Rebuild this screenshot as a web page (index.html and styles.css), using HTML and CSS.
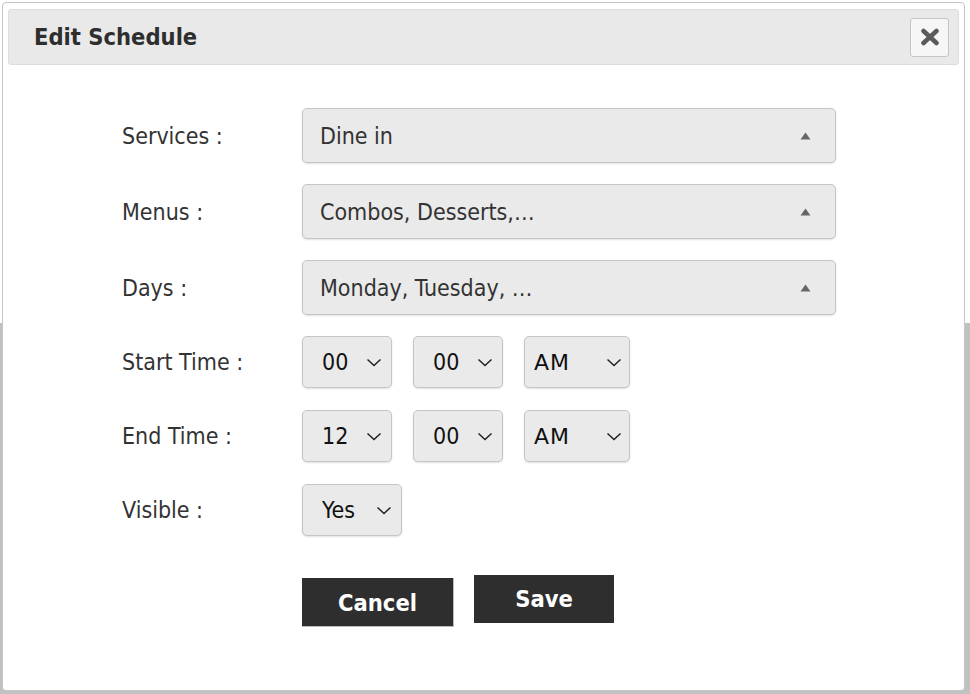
FILE: index.html
```html
<!DOCTYPE html>
<html lang="en">
<head>
    <meta charset="UTF-8">
    <meta name="viewport" content="width=device-width, initial-scale=1.0">
    <title>Edit Schedule</title>
    <link rel="stylesheet" href="styles.css">
</head>
<body>
    <div class="dialog" role="dialog" aria-labelledby="dialogTitle">
        <div class="titlebar">
            <span class="title" id="dialogTitle">Edit Schedule</span>
            <button class="close" aria-label="Close">
                <svg width="20" height="18" viewBox="0 0 20 18"><path d="M3.5 3 L16.5 15 M16.5 3 L3.5 15" stroke="#5a5a5a" stroke-width="4.5" stroke-linecap="round"/></svg>
            </button>
        </div>

        <div class="content">
            <div class="row">
                <label>Services :</label>
                <div class="multi"><span>Dine in</span><svg class="tri" width="11" height="8" viewBox="0 0 11 8"><path d="M5.5 0.5 L10.5 7.5 L0.5 7.5 Z" fill="#666"/></svg></div>
            </div>
            <div class="row">
                <label>Menus :</label>
                <div class="multi"><span>Combos, Desserts,…</span><svg class="tri" width="11" height="8" viewBox="0 0 11 8"><path d="M5.5 0.5 L10.5 7.5 L0.5 7.5 Z" fill="#666"/></svg></div>
            </div>
            <div class="row">
                <label>Days :</label>
                <div class="multi"><span>Monday, Tuesday, …</span><svg class="tri" width="11" height="8" viewBox="0 0 11 8"><path d="M5.5 0.5 L10.5 7.5 L0.5 7.5 Z" fill="#666"/></svg></div>
            </div>

            <div class="row small">
                <label>Start Time :</label>
                <div class="selects">
                    <div class="sel num"><span>00</span><svg class="chev" width="16" height="9" viewBox="0 0 16 9"><path d="M1.5 1.5 L8 7.5 L14.5 1.5" fill="none" stroke="#222" stroke-width="1.5"/></svg></div>
                    <div class="sel num"><span>00</span><svg class="chev" width="16" height="9" viewBox="0 0 16 9"><path d="M1.5 1.5 L8 7.5 L14.5 1.5" fill="none" stroke="#222" stroke-width="1.5"/></svg></div>
                    <div class="sel ampm"><span>AM</span><svg class="chev" width="16" height="9" viewBox="0 0 16 9"><path d="M1.5 1.5 L8 7.5 L14.5 1.5" fill="none" stroke="#222" stroke-width="1.5"/></svg></div>
                </div>
            </div>
            <div class="row small">
                <label>End Time :</label>
                <div class="selects">
                    <div class="sel num"><span>12</span><svg class="chev" width="16" height="9" viewBox="0 0 16 9"><path d="M1.5 1.5 L8 7.5 L14.5 1.5" fill="none" stroke="#222" stroke-width="1.5"/></svg></div>
                    <div class="sel num"><span>00</span><svg class="chev" width="16" height="9" viewBox="0 0 16 9"><path d="M1.5 1.5 L8 7.5 L14.5 1.5" fill="none" stroke="#222" stroke-width="1.5"/></svg></div>
                    <div class="sel ampm"><span>AM</span><svg class="chev" width="16" height="9" viewBox="0 0 16 9"><path d="M1.5 1.5 L8 7.5 L14.5 1.5" fill="none" stroke="#222" stroke-width="1.5"/></svg></div>
                </div>
            </div>
            <div class="row small">
                <label>Visible :</label>
                <div class="selects">
                    <div class="sel yes"><span>Yes</span><svg class="chev" width="16" height="9" viewBox="0 0 16 9"><path d="M1.5 1.5 L8 7.5 L14.5 1.5" fill="none" stroke="#222" stroke-width="1.5"/></svg></div>
                </div>
            </div>

            <div class="actions">
                <button class="btn cancel">Cancel</button>
                <button class="btn save">Save</button>
            </div>
        </div>
    </div>
</body>
</html>
```

FILE: styles.css
```css
:root {
    --ui-font: "DejaVu Sans Condensed", "DejaVu Sans", Verdana, sans-serif;
    --border: #c5c5c5;
    --field-bg: #eaeaea;
    --text: #333;
}

body {
    margin: 0;
    font-family: var(--ui-font);
    font-stretch: condensed;
    color: var(--text);
    /* page behind the dialog: white header area, grey overlay below */
    background: linear-gradient(to bottom, #fff 0, #fff 323px, #c1c1c1 323px);
    min-height: 694px;
}

.dialog {
    box-sizing: border-box;
    width: 963px;
    height: 689px;
    margin: 2px 0 0 2px;
    background: #fff;
    border: 1px solid #c5c5c5;
    border-radius: 4px;
}

.titlebar {
    box-sizing: border-box;
    height: 56px;
    margin: 6px 5px 0 5px;
    padding: 0 9px 0 25px;
    display: flex;
    align-items: center;
    justify-content: space-between;
    background: #e9e9e9;
    border: 1px solid #dddddd;
    border-radius: 3px;
}

.title {
    font-size: 23.5px;
    font-weight: bold;
    color: #2e2e2e;
}

.close {
    box-sizing: border-box;
    width: 39px;
    height: 39px;
    padding: 0;
    display: flex;
    align-items: center;
    justify-content: center;
    background: #f6f6f6;
    border: 1px solid #c5c5c5;
    border-radius: 3px;
    cursor: pointer;
}

.content {
    padding: 43px 0 0 119px;
}

.row {
    display: flex;
    align-items: center;
    height: 55px;
    margin-bottom: 21px;
}
.row.small {
    height: 52px;
    margin-bottom: 22px;
}
.row label {
    width: 180px;
    font-size: 23px;
    color: var(--text);
}

.multi {
    box-sizing: border-box;
    width: 534px;
    height: 55px;
    padding: 0 24px 0 17px;
    display: flex;
    align-items: center;
    justify-content: space-between;
    background: var(--field-bg);
    border: 1px solid var(--border);
    border-radius: 5px;
    box-shadow: 0 1px 2px rgba(0, 0, 0, 0.12);
    font-size: 23px;
    color: var(--text);
}

.selects {
    display: flex;
    gap: 21px;
}

.sel {
    box-sizing: border-box;
    height: 52px;
    padding: 0 9px 0 19px;
    display: flex;
    align-items: center;
    justify-content: space-between;
    background: var(--field-bg);
    border: 1px solid var(--border);
    border-radius: 5px;
    box-shadow: 0 1px 2px rgba(0, 0, 0, 0.12);
    font-size: 23px;
    color: #111;
}
.sel.num { width: 90px; }
.sel.ampm {
    width: 106px;
    padding-left: 9px;
    padding-right: 7px;
    font-family: "DejaVu Sans", Verdana, sans-serif;
    font-stretch: normal;
    font-size: 22px;
    letter-spacing: 1px;
}
.sel.yes { width: 100px; }

.actions {
    display: flex;
    align-items: flex-start;
    gap: 20px;
    padding: 17px 0 0 180px;
}

.btn {
    box-sizing: border-box;
    padding: 0;
    font-family: var(--ui-font);
    font-stretch: condensed;
    font-size: 23.5px;
    font-weight: bold;
    color: #fff;
    background: #2e2e2e;
    border: none;
    cursor: pointer;
}
.btn.cancel {
    width: 152px;
    height: 49px;
    margin-top: 3px;
    padding-top: 2px;
    border-right: 1px solid #bbb;
    border-bottom: 1px solid #bbb;
}
.btn.save {
    width: 140px;
    height: 48px;
}
```
